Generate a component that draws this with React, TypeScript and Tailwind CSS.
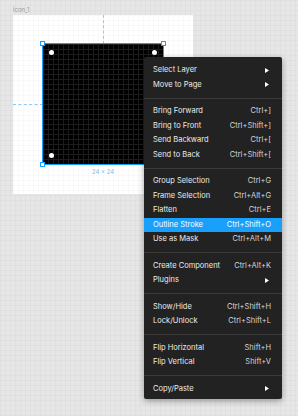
import React from 'react';

type Item = { label: string; shortcut?: string; submenu?: boolean; active?: boolean };

const GROUPS: Item[][] = [
  [
    { label: 'Select Layer', submenu: true },
    { label: 'Move to Page', submenu: true },
  ],
  [
    { label: 'Bring Forward', shortcut: 'Ctrl+]' },
    { label: 'Bring to Front', shortcut: 'Ctrl+Shift+]' },
    { label: 'Send Backward', shortcut: 'Ctrl+[' },
    { label: 'Send to Back', shortcut: 'Ctrl+Shift+[' },
  ],
  [
    { label: 'Group Selection', shortcut: 'Ctrl+G' },
    { label: 'Frame Selection', shortcut: 'Ctrl+Alt+G' },
    { label: 'Flatten', shortcut: 'Ctrl+E' },
    { label: 'Outline Stroke', shortcut: 'Ctrl+Shift+O', active: true },
    { label: 'Use as Mask', shortcut: 'Ctrl+Alt+M' },
  ],
  [
    { label: 'Create Component', shortcut: 'Ctrl+Alt+K' },
    { label: 'Plugins', submenu: true },
  ],
  [
    { label: 'Show/Hide', shortcut: 'Ctrl+Shift+H' },
    { label: 'Lock/Unlock', shortcut: 'Ctrl+Shift+L' },
  ],
  [
    { label: 'Flip Horizontal', shortcut: 'Shift+H' },
    { label: 'Flip Vertical', shortcut: 'Shift+V' },
  ],
  [{ label: 'Copy/Paste', submenu: true }],
];

function MenuRow({ item }: { item: Item }) {
  return (
    <div
      className={`flex items-center justify-between h-[14.5px] pl-[9px] pr-[11px] ${
        item.active ? 'bg-[#18a0fb] text-white' : 'text-[#ececec]'
      }`}
    >
      <span>{item.label}</span>
      {item.submenu ? (
        <svg width="4" height="5" viewBox="0 0 4 5" className="mr-[2px]">
          <path d="M0 0L4 2.5L0 5Z" fill="#ffffff" />
        </svg>
      ) : (
        <span className={item.active ? 'text-white' : 'text-[#d6d6d6]'}>{item.shortcut}</span>
      )}
    </div>
  );
}

export default function App() {
  return (
    <div
      className="relative w-[298px] h-[416px] overflow-hidden bg-[#e6e6e6] bg-[linear-gradient(to_right,rgba(0,0,0,0.022)_1px,transparent_1px),linear-gradient(to_bottom,rgba(0,0,0,0.022)_1px,transparent_1px)] bg-[length:5px_5px]"
      style={{ fontFamily: 'Inter, "Noto Sans", sans-serif' }}
    >
      {/* frame label */}
      <div className="pl-[13px] pt-[6px] h-[15px] text-[6px] leading-[8px] text-[#9a9a9a]">icon_1</div>

      {/* frame */}
      <div className="relative ml-[13px] w-[180px] h-[179px] bg-white bg-[linear-gradient(to_right,rgba(0,0,0,0.02)_1px,transparent_1px),linear-gradient(to_bottom,rgba(0,0,0,0.02)_1px,transparent_1px)] bg-[length:5px_5px]">
        {/* guides */}
        <div className="absolute left-[90px] top-0 h-[29px] border-l border-dashed border-[#8cc9f5]" />
        <div className="absolute left-0 top-[89px] w-[30px] border-t border-dashed border-[#8cc9f5]" />

        {/* selected square */}
        <div className="absolute left-[30px] top-[29px] w-[120px] h-[120px] bg-black bg-[linear-gradient(to_right,#1c1c1c_1px,transparent_1px),linear-gradient(to_bottom,#1c1c1c_1px,transparent_1px)] bg-[length:5px_5px] outline outline-1 outline-[#18a0fb]">
          <div className="absolute left-[6px] top-[6px] w-[5px] h-[5px] rounded-full bg-white" />
          <div className="absolute right-[6px] top-[6px] w-[5px] h-[5px] rounded-full bg-white" />
          <div className="absolute left-[6px] bottom-[6px] w-[5px] h-[5px] rounded-full bg-white" />
          <div className="absolute right-[6px] bottom-[6px] w-[5px] h-[5px] rounded-full bg-white" />

          <div className="absolute -left-[3px] -top-[3px] w-[5px] h-[5px] bg-white border border-[#18a0fb]" />
          <div className="absolute -right-[3px] -top-[3px] w-[5px] h-[5px] bg-white border border-[#18a0fb]" />
          <div className="absolute -left-[3px] -bottom-[3px] w-[5px] h-[5px] bg-white border border-[#18a0fb]" />
          <div className="absolute -right-[3px] -bottom-[3px] w-[5px] h-[5px] bg-white border border-[#18a0fb]" />
        </div>

        <div className="absolute left-[30px] top-[153px] w-[120px] text-center text-[6px] leading-[8px] text-[#7fbff0]">
          24 × 24
        </div>
      </div>

      {/* context menu */}
      <div className="absolute left-[144px] top-[57px] w-[138px] pt-[6px] pb-[3px] bg-[#222222] rounded-[2px] shadow-[0_2px_6px_rgba(0,0,0,0.35)] text-[7.5px] leading-[10px]">
        {GROUPS.map((group, gi) => (
          <div key={gi}>
            {gi > 0 && <div className="my-[5.5px] h-px bg-[#3a3a3a]" />}
            {group.map((item) => (
              <MenuRow key={item.label} item={item} />
            ))}
          </div>
        ))}
      </div>
    </div>
  );
}
